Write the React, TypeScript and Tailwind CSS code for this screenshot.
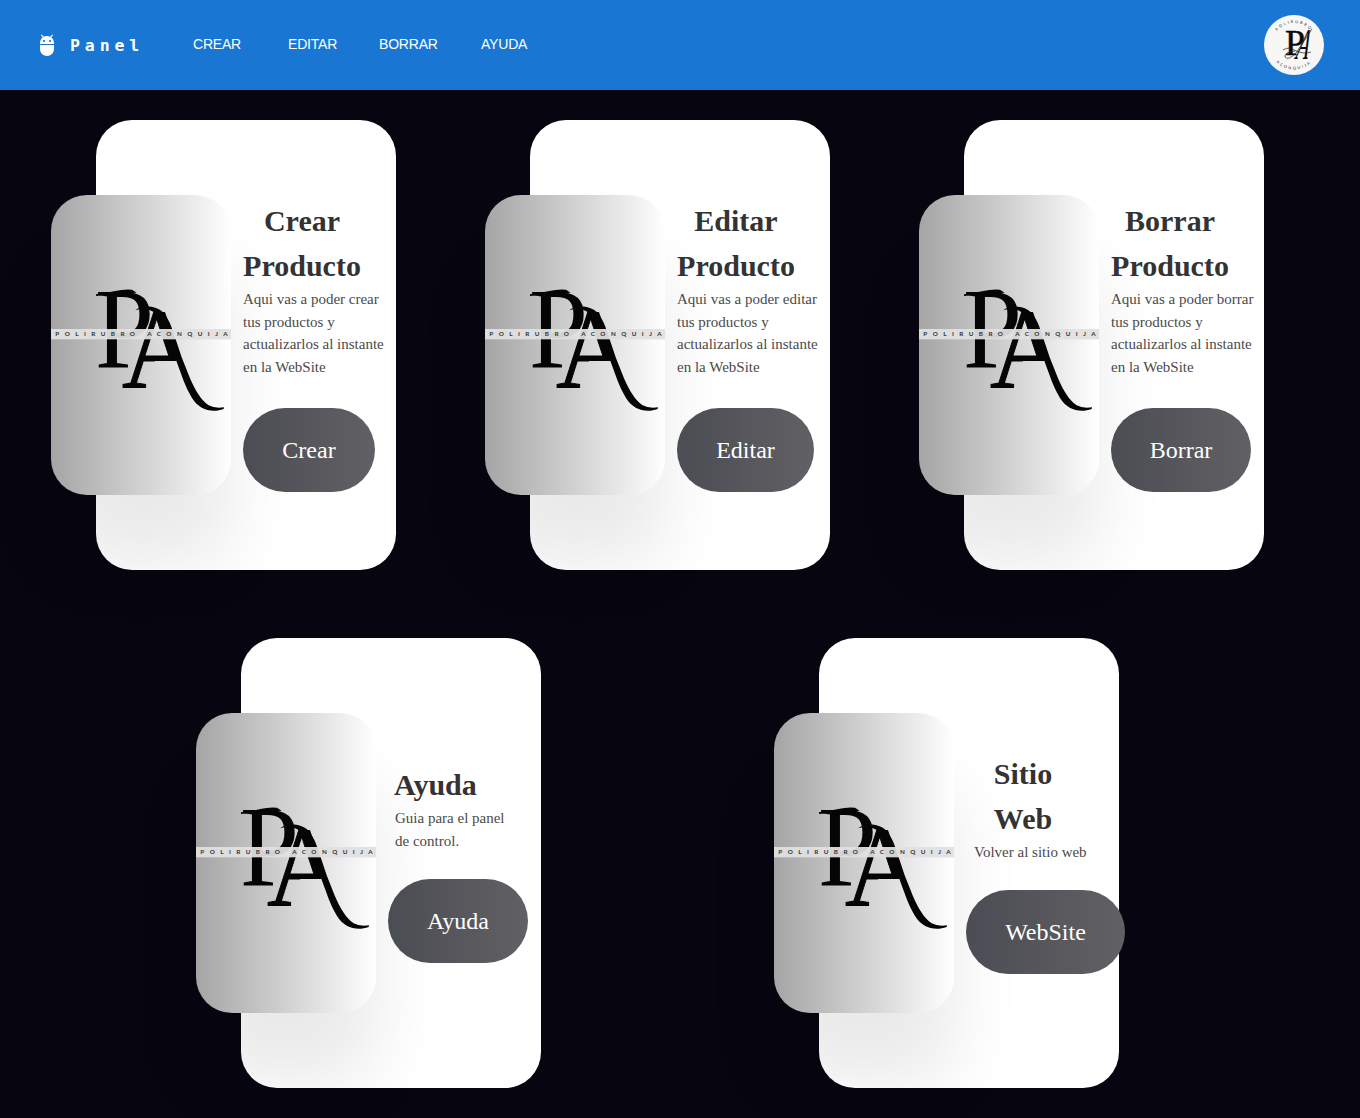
import { MdAdb } from 'react-icons/md';

type CardData = {
  title: string[];
  text: string[];
  button: string;
  titleClass: string;
  textClass: string;
  buttonClass: string;
};

const topCards: CardData[] = [
  {
    title: ['Crear', 'Producto'],
    text: ['Aqui vas a poder crear', 'tus productos y', 'actualizarlos al instante', 'en la WebSite'],
    button: 'Crear',
    titleClass: 'w-[118px]',
    textClass: '',
    buttonClass: 'mt-[30px] w-[132px]',
  },
  {
    title: ['Editar', 'Producto'],
    text: ['Aqui vas a poder editar', 'tus productos y', 'actualizarlos al instante', 'en la WebSite'],
    button: 'Editar',
    titleClass: 'w-[118px]',
    textClass: '',
    buttonClass: 'mt-[30px] w-[137px]',
  },
  {
    title: ['Borrar', 'Producto'],
    text: ['Aqui vas a poder borrar', 'tus productos y', 'actualizarlos al instante', 'en la WebSite'],
    button: 'Borrar',
    titleClass: 'w-[118px]',
    textClass: '',
    buttonClass: 'mt-[30px] w-[140px]',
  },
];

const bottomCards: CardData[] = [
  {
    title: ['Ayuda'],
    text: ['Guia para el panel', 'de control.'],
    button: 'Ayuda',
    titleClass: 'ml-[6px] w-[82px]',
    textClass: 'ml-[7px]',
    buttonClass: 'mt-[27px] mb-px w-[140px]',
  },
  {
    title: ['Sitio', 'Web'],
    text: ['Volver al sitio web'],
    button: 'WebSite',
    titleClass: 'ml-[27px] w-[60px]',
    textClass: 'ml-[8px]',
    buttonClass: 'mt-[27px] mb-px w-[159px]',
  },
];

function BrandArt({ id }: { id: string }) {
  return (
    <svg viewBox="0 0 540 900" className="h-full w-full" aria-hidden="true">
      <defs>
        <clipPath id={id}>
          <path d="M200 126H380L410 262V273H345L330 375H200Z" />
        </clipPath>
      </defs>
      <g transform="translate(-33 225)" fontFamily="Liberation Serif" fill="#050505">
        <text transform="translate(165 291) scale(.93 1)" fontSize="342">P</text>
        <g clipPath={`url(#${id})`}>
          <text transform="translate(246 353) scale(.9 1)" fontSize="350" stroke="#050505" strokeWidth="3">A</text>
        </g>
        {/* swashes around the two initials */}
        <path d="M286 121C300 106 346 104 370 128C392 152 400 190 407 208L425 262L450 325C466 362 484 392 506 406Q524 416 552 412L551 417C516 430 478 420 456 384C444 364 436 346 430 330L405 262L385 208C376 180 366 152 352 136C334 116 308 114 286 121Z" />
        <path d="M168 73Q200 69 226 63Q250 57 276 59L290 68L226 72L168 78Z" />
      </g>
      <rect x="0" y="402" width="540" height="31" fill="#e0e0e0" fillOpacity=".94" />
      <text x="13" y="422" fontFamily="Lato" fontWeight="700" fontSize="19" fill="#333" textLength="517" lengthAdjust="spacing">
        POLIRUBRO ACONQUIJA
      </text>
    </svg>
  );
}

function Card({ data, id }: { data: CardData; id: string }) {
  return (
    <article className="flex h-[450px] w-[300px] shrink-0 items-center rounded-[36px] bg-white">
      <div className="-ml-[45px] h-[300px] w-[180px] shrink-0 overflow-hidden rounded-[36px] bg-linear-to-r from-[#a5a5a5] to-white shadow-[0_70px_70px_rgba(0,0,0,0.085)]">
        <BrandArt id={id} />
      </div>
      <div className="ml-3 shrink-0 whitespace-nowrap font-['Liberation_Serif',serif]">
        <h2 className={`text-center text-[30px] leading-[45px] font-bold text-[#333] ${data.titleClass}`}>
          {data.title.map((line) => (
            <span key={line} className="block">{line}</span>
          ))}
        </h2>
        <p className={`text-[15px] leading-[22.5px] text-[#4a4a4a] ${data.textClass}`}>
          {data.text.map((line) => (
            <span key={line} className="block">{line}</span>
          ))}
        </p>
        <button className={`block h-[84px] rounded-[42px] bg-linear-to-r from-[#4b4d54] to-[#626064] text-center text-2xl text-white ${data.buttonClass}`}>
          {data.button}
        </button>
      </div>
    </article>
  );
}

function Avatar() {
  return (
    <svg viewBox="0 0 60 60" className="h-[60px] w-[60px] rounded-full bg-[#f7f7f6]" aria-hidden="true">
      <defs>
        <path id="arc-top" d="M8 30A22 22 0 0 1 52 30" />
        <path id="arc-bottom" d="M4.500 29A25.500 25.500 0 0 0 55.500 29" />
      </defs>
      <g fontFamily="Liberation Serif" fill="#0a0a0a">
        <text x="21" y="40" fontSize="36" textLength="20" lengthAdjust="spacingAndGlyphs" stroke="#0a0a0a" strokeWidth=".5">P</text>
        <text fontSize="44" fontStyle="italic" transform="translate(31 44) skewX(-12) scale(.46 1)">A</text>
      </g>
      <path d="M19 35Q26 31 30 35Q40 40 47 37M48 14L32 38Q24 46 21 42Q20 37 31 36" fill="none" stroke="#222" strokeWidth=".7" />
      <g fontFamily="Lato" fontSize="3.800" fill="#222" letterSpacing="1.900">
        <text textAnchor="middle"><textPath href="#arc-top" startOffset="50%">POLIRUBRO</textPath></text>
        <text textAnchor="middle"><textPath href="#arc-bottom" startOffset="50%">ACONQUIJA</textPath></text>
      </g>
    </svg>
  );
}

export default function App() {
  return (
    <div className="min-h-[1118px] w-full overflow-hidden bg-[#07050f]">
      <header className="flex h-[90px] items-center bg-[#1976d2] pr-9 pl-[35px] text-white">
        <MdAdb className="size-6" />
        <span className="mt-0.5 ml-[11px] w-[123px] font-['DejaVu_Sans_Mono',monospace] text-[16.5px] font-bold tracking-[4.9px]">Panel</span>
        <nav className="-mt-0.5 flex flex-1 font-['Liberation_Sans',sans-serif] text-[14px] tracking-[-0.2px]">
          <a className="w-[95px]">CREAR</a>
          <a className="w-[91px]">EDITAR</a>
          <a className="w-[102px]">BORRAR</a>
          <a>AYUDA</a>
        </nav>
        <Avatar />
      </header>
      <main>
        <section className="flex gap-[134px] pt-[30px] pl-[96px]">
          {topCards.map((c) => <Card key={c.button} data={c} id={`art-${c.button}`} />)}
        </section>
        <section className="flex gap-[278px] pt-[68px] pl-[241px]">
          {bottomCards.map((c) => <Card key={c.button} data={c} id={`art-${c.button}`} />)}
        </section>
      </main>
    </div>
  );
}
